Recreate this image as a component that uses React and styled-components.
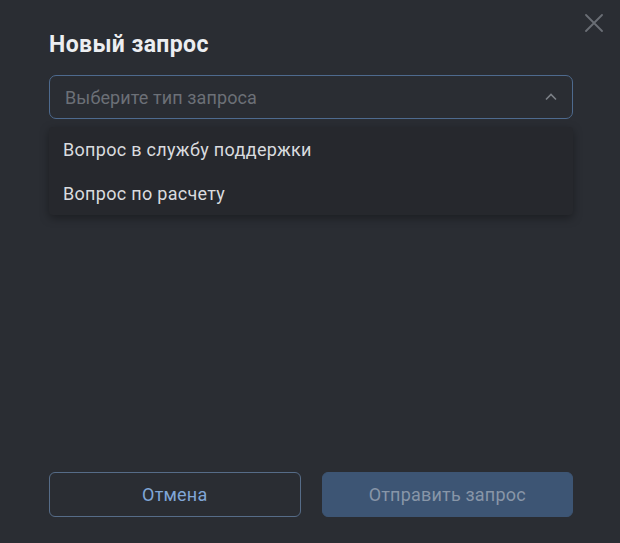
import React, { useState } from 'react';
import styled, { createGlobalStyle } from 'styled-components';

const GlobalStyle = createGlobalStyle`
  html, body {
    margin: 0;
    padding: 0;
    background: #2a2d33;
  }
  body {
    font-family: Roboto, "Noto Sans", sans-serif;
  }
`;

const Modal = styled.div`
  position: relative;
  box-sizing: border-box;
  width: 620px;
  height: 543px;
  padding: 31px 47px 26px 49px;
  background: #2a2d33;
  display: flex;
  flex-direction: column;
`;

const CloseButton = styled.button`
  position: absolute;
  top: 13px;
  right: 16px;
  width: 20px;
  height: 20px;
  padding: 0;
  border: none;
  background: transparent;
  cursor: pointer;
  display: flex;
  align-items: center;
  justify-content: center;
`;

const Title = styled.h2`
  margin: 0 0 16px;
  font-size: 23px;
  line-height: 28px;
  font-weight: 700;
  letter-spacing: 0.4px;
  color: #eceef1;
`;

const SelectWrap = styled.div`
  position: relative;
`;

const SelectBox = styled.div`
  box-sizing: border-box;
  height: 44px;
  border: 1px solid #4e6a8e;
  border-radius: 7px;
  display: flex;
  align-items: center;
  justify-content: space-between;
  padding: 0 15px 0 15px;
  cursor: pointer;
`;

const Placeholder = styled.span`
  font-size: 18px;
  letter-spacing: 0.1px;
  color: #6c7077;
`;

const Menu = styled.ul`
  position: absolute;
  top: 52px;
  left: 0;
  right: 0;
  margin: 0;
  padding: 0;
  list-style: none;
  background: #26282d;
  border-radius: 4px;
  box-shadow: 0 3px 10px rgba(0, 0, 0, 0.35);
`;

const MenuItem = styled.li`
  height: 44px;
  display: flex;
  align-items: center;
  padding: 0 14px;
  font-size: 18px;
  letter-spacing: 0.3px;
  color: #d9dbdf;
  cursor: pointer;
`;

const Footer = styled.div`
  margin-top: auto;
  display: grid;
  grid-template-columns: 1fr 1fr;
  gap: 21px;
`;

const Button = styled.button`
  box-sizing: border-box;
  height: 45px;
  border-radius: 6px;
  font-family: Roboto, "Noto Sans", sans-serif;
  font-size: 18px;
  letter-spacing: 0.2px;
  cursor: pointer;
  border: 1px solid ${p => (p.$primary ? '#3d5574' : '#566c88')};
  background: ${p => (p.$primary ? '#3d5574' : 'transparent')};
  color: ${p => (p.$primary ? '#8896a8' : '#80a6d8')};
`;

const items = ['Вопрос в службу поддержки', 'Вопрос по расчету'];

export default function App() {
  const [open, setOpen] = useState(true);

  return (
    <>
      <GlobalStyle />
      <Modal>
        <CloseButton aria-label="Закрыть">
          <svg width="18" height="18" viewBox="0 0 18 18">
            <path d="M1 1L17 17M17 1L1 17" stroke="#6a6e75" strokeWidth="1.8" strokeLinecap="round" />
          </svg>
        </CloseButton>
        <Title>Новый запрос</Title>
        <SelectWrap>
          <SelectBox onClick={() => setOpen(!open)}>
            <Placeholder>Выберите тип запроса</Placeholder>
            <svg width="12" height="8" viewBox="0 0 12 8">
              <path d="M1 6.5L6 1.5L11 6.5" fill="none" stroke="#7b7f86" strokeWidth="1.6" />
            </svg>
          </SelectBox>
          {open && (
            <Menu>
              {items.map(item => (
                <MenuItem key={item}>{item}</MenuItem>
              ))}
            </Menu>
          )}
        </SelectWrap>
        <Footer>
          <Button>Отмена</Button>
          <Button $primary disabled>Отправить запрос</Button>
        </Footer>
      </Modal>
    </>
  );
}
